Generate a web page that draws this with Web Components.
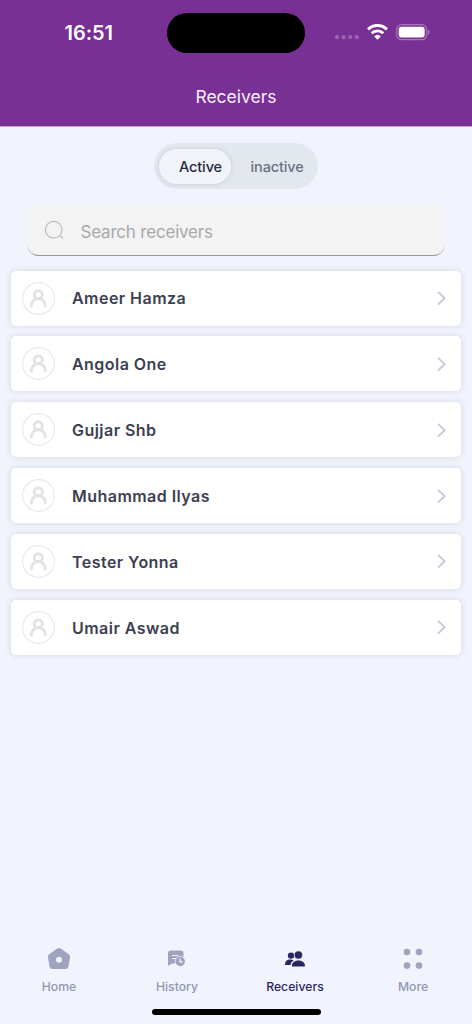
<!DOCTYPE html>
<html lang="en">
<head>
<meta charset="utf-8">
<title>Receivers</title>
<style>
html,body{margin:0;height:100%}
body{font-family:Inter,"Liberation Sans",sans-serif;background:#f1f4fc;overflow:hidden}
</style>
</head>
<body>
<receivers-app></receivers-app>
<script>
function define(name, html) {
  const t = document.createElement('template');
  t.innerHTML = html;
  customElements.define(name, class extends HTMLElement {
    constructor() {
      super();
      this.attachShadow({mode: 'open'}).appendChild(t.content.cloneNode(true));
    }
  });
}

define('status-bar', `
<style>
:host{display:grid;grid-template-columns:167px 138px 1fr;height:66px;box-sizing:border-box;padding-top:12.5px;color:#fff}
.time{font-size:20px;font-weight:600;line-height:40px;padding-left:64.5px;letter-spacing:-.05px}
.island{height:40.5px;border-radius:21px;background:#000}
.signals{display:flex;align-items:flex-start;padding-left:30px}
.cell{margin-top:22.5px;margin-right:7.7px}
.wifi{margin-top:11px;margin-right:8.6px}
.batt{margin-top:11px}
svg{display:block}
</style>
<div class="time">16:51</div>
<div class="island"></div>
<div class="signals">
<svg class="cell" width="24" height="5" fill="#9c64af"><rect y="0" width="4" height="4" rx="1.5"/><rect x="6.6" width="4" height="4" rx="1.5"/><rect x="13.2" width="4" height="4" rx="1.5"/><rect x="19.8" width="4" height="4" rx="1.5"/></svg>
<svg class="wifi" width="21" height="17" viewBox="0 0 21 17" fill="none" stroke="#fff"><path d="M1.1 5.4a13.3 13.3 0 0 1 18.8 0" stroke-width="3"/><path d="M4.7 9.2a8.2 8.2 0 0 1 11.6 0" stroke-width="2.8"/><path d="M10.5 15.8 7.2 12.4a4.8 4.8 0 0 1 6.6 0Z" fill="#fff" stroke="none"/></svg>
<svg class="batt" width="36" height="17" viewBox="0 0 36 17"><rect x=".7" y=".7" width="30" height="15" rx="5" fill="none" stroke="#a778b7" stroke-width="1.2"/><rect x="2.7" y="2.8" width="26" height="10.8" rx="3" fill="#fff"/><path d="M32 5.6c2.2.8 2.2 4.2 0 5Z" fill="#a778b7"/></svg>
</div>`);

define('title-bar', `
<style>
:host{display:block;height:60px;text-align:center;font-size:17.5px;line-height:61.5px;color:#f7effa;letter-spacing:0}
</style><slot></slot>`);

define('segment-toggle', `
<style>
:host{display:flex;width:164px;height:46px;box-sizing:border-box;padding:5.5px 5px;border-radius:23px;background:#e3e8ef;margin:16px auto 0;font-size:14.5px;font-weight:500;line-height:35px;letter-spacing:-.12px}
.on{width:72px;box-sizing:border-box;padding-left:20px;border-radius:18px;background:#f0f4f9;box-shadow:0 0 4px rgba(80,90,90,.2);color:#29293e}
.off{padding-left:19.5px;color:#6c7080}
</style>
<div class="on"><slot name="on"></slot></div><div class="off"><slot name="off"></slot></div>`);

define('search-field', `
<style>
:host{display:flex;align-items:center;height:52px;box-sizing:border-box;margin:15px 28px 0;padding-left:16px;border-radius:10px;background:#f3f3f3;border-bottom:1.2px solid #96969b;color:#a8a8ad;font-size:17px;letter-spacing:-.2px}
svg{margin-right:16.5px;flex:none}
.text{padding-top:4px}
</style>
<svg width="20" height="20" viewBox="0 0 20 20" fill="none" stroke="#bababd" stroke-width="1.2" stroke-linecap="round"><circle cx="9.7" cy="9.7" r="8.3"/><path d="m16.7 16.2 1.8 2"/></svg>
<div class="text"><slot></slot></div>`);

define('receiver-row', `
<style>
:host{display:flex;align-items:center;height:55px;box-sizing:border-box;padding:0 14px 0 11px;border-radius:5px;background:#fff;box-shadow:0 0 6px rgba(70,80,80,.17);font-size:16px;font-weight:600;letter-spacing:.46px;color:#3c4051}
.name{flex:1;padding:.6px 0 0 17px}
svg{flex:none}
</style>
<svg width="33" height="33" viewBox="0 0 33 33" fill="none" stroke="#e2e3e4"><circle cx="16.5" cy="16.5" r="15.9" stroke-width="1.1" stroke="#e8e9ea"/><circle cx="16.3" cy="12.8" r="4.1" stroke-width="2.9"/><path d="M9.4 24v-.6a6.9 6.9 0 0 1 13.8 0v.6" stroke-width="2.9" stroke-linecap="round"/></svg>
<div class="name"><slot></slot></div>
<svg width="12" height="16" viewBox="0 0 12 16" fill="none" stroke="#c3c7d6" stroke-width="1.8"><path d="m3 1.8 6.6 6.4L3 14.6"/></svg>`);

define('nav-item', `
<style>
:host{display:flex;flex-direction:column;align-items:center;flex:1;color:#9395b4;font-size:12.2px;font-weight:500;letter-spacing:.03px;line-height:16px}
:host([active]){color:#2a2760}
.icon{height:35.5px;display:flex}
</style>
<div class="icon"><slot name="icon"></slot></div><slot></slot>`);

define('tab-bar', `
<style>
:host{display:block;height:81px}
nav{display:flex}
svg{display:block}
.indicator{width:169px;height:5.5px;margin:14.5px auto 0;border-radius:3px;background:#000}
</style>
<nav>
<nav-item><svg slot="icon" width="24" height="32" viewBox="0 0 24 32" fill="#a1a3be"><path fill-rule="evenodd" d="M10.2 5.5Q12 4.3 13.8 5.5l8 5.8q1.5 1.1 1.2 3l-1.5 9.1q-.4 2.6-3 2.6h-13q-2.6 0-3-2.6L1 14.3q-.3-1.9 1.2-3ZM12 13.8a3 3 0 1 0 0 6 3 3 0 0 0 0-6Z"/></svg>Home</nav-item>
<nav-item><svg slot="icon" width="20" height="32" viewBox="0 0 20 32"><path d="M4 7.6h10q2.5 0 2.5 2.5V20.5H5.5L1 22.8V10.6q0-3 3-3Z" fill="#a1a3be"/><path d="M5 12.5h6M5 15.5h4" stroke="#f1f4fc" stroke-width="1.1"/><circle cx="13.2" cy="18.5" r="5.4" fill="#f1f4fc"/><circle cx="13.2" cy="18.5" r="4.7" fill="#a1a3be"/><path d="M13 15.5v3.4h2.8" fill="none" stroke="#f1f4fc" stroke-width="1.2"/></svg>History</nav-item>
<nav-item active><svg slot="icon" width="22" height="32" viewBox="0 0 22 32" fill="#2a2760"><circle cx="7" cy="12.6" r="3.2"/><path d="M1 22c0-6 5-6.2 8.8-4.6-2 1-3 2.3-3.2 4.6Z"/><circle cx="14.4" cy="12" r="4.1" stroke="#f1f4fc" stroke-width=".6"/><path d="M8 23.5v-1c0-6.6 12.9-6.6 12.9 0v1Z"/></svg>Receivers</nav-item>
<nav-item><svg slot="icon" width="20" height="32" viewBox="0 0 20 32" fill="#a1a3be"><circle cx="4" cy="9" r="3.3"/><circle cx="16" cy="9" r="3.3"/><circle cx="4" cy="22.6" r="3.3"/><circle cx="16" cy="22.6" r="3.3"/></svg>More</nav-item>
</nav>
<div class="indicator"></div>`);

define('receivers-app', `
<style>
:host{display:flex;flex-direction:column;height:1024px;background:#f1f4fc}
header{background:#783094;border-bottom:1px solid #c5a5d6;box-sizing:border-box;height:127px}
main{flex:1}
.list{display:flex;flex-direction:column;gap:10.86px;padding:14.5px 11px 0}
</style>
<header><status-bar></status-bar><title-bar>Receivers</title-bar></header>
<main>
<segment-toggle><span slot="on">Active</span><span slot="off">inactive</span></segment-toggle>
<search-field>Search receivers</search-field>
<div class="list">
<receiver-row>Ameer Hamza</receiver-row>
<receiver-row>Angola One</receiver-row>
<receiver-row>Gujjar Shb</receiver-row>
<receiver-row>Muhammad Ilyas</receiver-row>
<receiver-row>Tester Yonna</receiver-row>
<receiver-row>Umair Aswad</receiver-row>
</div>
</main>
<tab-bar></tab-bar>`);
</script>
</body>
</html>
